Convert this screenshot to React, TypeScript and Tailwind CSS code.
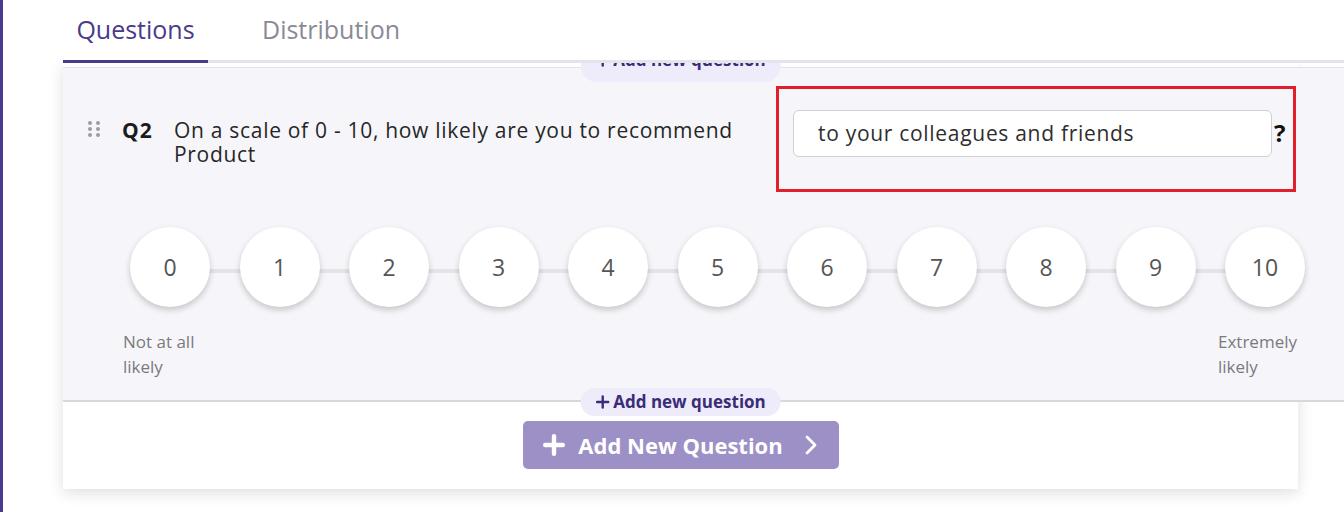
import React from "react";

const font = { fontFamily: "'Open Sans', Lato, sans-serif" };

function PlusIcon({ size, stroke, color }: { size: number; stroke: number; color: string }) {
  return (
    <svg width={size} height={size} viewBox="0 0 20 20" fill="none">
      <path d="M10 2v16M2 10h16" stroke={color} strokeWidth={stroke} strokeLinecap="round" />
    </svg>
  );
}

export default function App() {
  const nums = [0, 1, 2, 3, 4, 5, 6, 7, 8, 9, 10];
  return (
    <div className="w-[1344px] h-[512px] bg-white flex overflow-hidden" style={font}>
      <div className="w-[3px] h-full bg-[#4b3b8f] shrink-0" />
      <div className="flex-1 flex flex-col relative">
        {/* Tabs */}
        <div className="relative z-20 bg-white h-[63px] flex flex-col shrink-0">
          <div className="flex items-end h-[60px] pl-[60px]">
            <div className="w-[145px] h-full flex items-center justify-center text-[25px] text-[#4a3a8c]">Questions</div>
            <div className="ml-[54px] h-full flex items-center text-[25px] text-[#8a8a94]">Distribution</div>
          </div>
          <div className="flex h-[3px]">
            <div className="w-[60px] bg-white" />
            <div className="w-[145px] bg-[#4a3a8c]" />
            <div className="flex-1 bg-[#e4e4ea]" />
          </div>
        </div>

        {/* Card */}
        <div className="ml-[60px] w-[1235px] bg-white shadow-[0_4px_14px_rgba(0,0,0,0.13)] relative">
          <div className="h-[4px]" />
          <div className="relative mr-[-46px] bg-[#f6f6fa] border-t border-[#e2e2e8] border-b-2 border-b-[#d8d8dc] pt-[42px] pb-[21px]">
            {/* question row */}
            <div className="flex items-start pl-[25px]">
              <div className="mt-[11px] grid grid-cols-2 gap-x-[4px] gap-y-[2px] w-[12px]">
                {[0, 1, 2, 3, 4, 5].map((i) => (
                  <div key={i} className="w-[4px] h-[4px] rounded-full bg-[#9c9ca8]" />
                ))}
              </div>
              <div className="ml-[22px] mt-[8px] w-[52px] text-[21px] leading-[24px] tracking-[1px] font-bold text-[#1c1c1c]">Q2</div>
              <div className="mt-[8px] w-[619px] text-[21px] leading-[24px] tracking-[0.7px] text-[#262626]">
                On a scale of 0 - 10, how likely are you to recommend
                <br />
                Product
              </div>
              <div className="w-[479px] h-[47px] rounded-[6px] border border-[#cfcfd4] bg-white flex items-center pl-[24px] text-[21px] tracking-[0.7px] text-[#2e2e2e]">
                to your colleagues and friends
              </div>
              <div className="ml-[2px] mt-[9px] text-[24px] leading-[28px] font-bold text-[#111]">?</div>
            </div>

            {/* red annotation box */}
            <div className="absolute left-[713px] top-[18px] w-[520px] h-[106px] border-[3px] border-[#e01f2a] pointer-events-none" />

            {/* scale */}
            <div className="mt-[61px] ml-[67px] w-[1175px] relative flex justify-between">
              <div className="absolute left-[40px] right-[40px] top-[42px] h-[4px] bg-[#e3e3e8]" />
              {nums.map((n) => (
                <div
                  key={n}
                  className="relative w-[80px] h-[80px] rounded-full bg-white shadow-[0_3px_6px_rgba(0,0,0,0.2)] flex items-center justify-center text-[23px] text-[#555]"
                >
                  {n}
                </div>
              ))}
            </div>
            <div className="mt-[22px] ml-[60px] w-[1185px] flex justify-between text-[17px] leading-[25px] text-[#7a7a7e]">
              <div className="w-[90px]">
                Not at all
                <br />
                likely
              </div>
              <div className="w-[90px]">
                Extremely
                <br />
                likely
              </div>
            </div>
          </div>

          {/* top pill, partly hidden under the tab bar */}
          <div className="absolute left-1/2 -translate-x-1/2 top-[-13px] h-[32px] px-[15px] rounded-full bg-[#eeebfa] flex items-start gap-[4px] text-[#3b2c78] text-[17px] leading-[20px] font-bold whitespace-nowrap">
            <span className="mt-[3px]">
              <PlusIcon size={14} stroke={3.4} color="#3b2c78" />
            </span>
            <span>Add new question</span>
          </div>

          {/* bottom pill */}
          <div className="absolute left-1/2 -translate-x-1/2 -translate-y-1/2 top-[339px] z-10 h-[28px] px-[15px] rounded-full bg-[#eeebfa] flex items-center gap-[4px] text-[#3b2c78] text-[17px] font-bold whitespace-nowrap">
            <PlusIcon size={14} stroke={3.4} color="#3b2c78" />
            <span>Add new question</span>
          </div>

          {/* bottom */}
          <div className="pt-[19px] pb-[20px] flex justify-center">
            <button className="h-[48px] w-[316px] rounded-[5px] bg-[#9d90c6] flex items-center justify-center gap-[13px] text-white text-[22px] font-bold">
              <PlusIcon size={22} stroke={4} color="#ffffff" />
              <span>Add New Question</span>
              <svg width="14" height="22" viewBox="0 0 14 22" fill="none" className="ml-[8px]">
                <path d="M3 3l8 8-8 8" stroke="#ffffff" strokeWidth="2.8" strokeLinecap="round" strokeLinejoin="round" />
              </svg>
            </button>
          </div>
        </div>
      </div>
    </div>
  );
}
